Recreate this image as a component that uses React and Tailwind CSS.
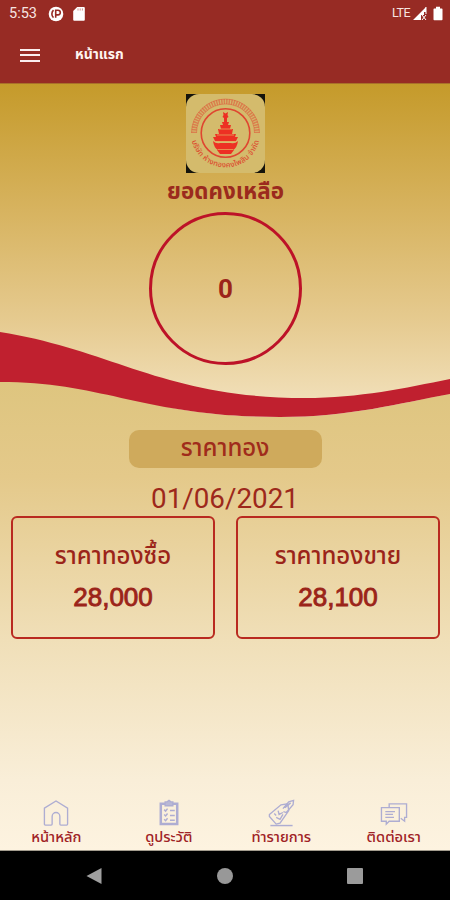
import React from "react";

const THAI = "font-['Noto_Sans_Thai','Liberation_Sans',sans-serif]";

function StatusBar() {
  return (
    <div className="flex h-[27px] items-center justify-between pl-[9px] pr-[7px] text-[#f6e4e0]">
      <div className="flex items-center">
        <span className="w-[39px] pt-[2px] font-[Roboto,sans-serif] text-[14.5px] leading-none">5:53</span>
        <svg className="h-4 w-4" viewBox="0 0 16 16">
          <circle cx="8" cy="8" r="7.3" fill="#fff" />
          <path d="M7.700 11.800V4.300H10a2.300 2.300 0 0 1 0 4.600H7.700M5.500 4.200a5 5 0 0 0 0 7.400" fill="none" stroke="#972b24" strokeWidth="1.6" />
        </svg>
        <svg className="ml-[9px] h-4 w-3" viewBox="0 0 12 16">
          <path d="M4.2 1h6.600q1 0 1 1v11.800q0 1-1 1H1.200q-1 0-1-1V5z" fill="#fff" />
          <path d="M5 2.400v2.200M7.200 2.400v2.200M9.400 2.400v2.200" stroke="#c98b85" strokeWidth=".9" />
        </svg>
      </div>
      <div className="flex items-center">
        <span className="font-[Roboto,sans-serif] text-[12.5px] leading-none tracking-[-0.5px]">LTE</span>
        <svg className="ml-[2px] h-[15px] w-[15px]" viewBox="0 0 15 15">
          <path d="M1 14 14 1v5h-2v3H9v5z" fill="#fff" />
          <path d="m10 9 4 5m0-5-4 5M14 1v7" fill="none" stroke="#fff" strokeWidth="1" />
        </svg>
        <svg className="ml-[6px] h-[15px] w-[10px]" viewBox="0 0 10 15">
          <path d="M3 .8h4v1.700h1.700q.8 0 .8.8v10.200q0 .8-.8.8H1.300q-.8 0-.8-.8V3.300q0-.8.8-.8H3z" fill="#fff" />
        </svg>
      </div>
    </div>
  );
}

function Header() {
  return (
    <header className="h-[83px] shrink-0 bg-[#972b24]">
      <StatusBar />
      <div className="flex h-14 items-center pl-5">
        <div className="flex w-5 flex-col gap-[3.5px]">
          <i className="h-[2px] bg-[#fbeeee]" />
          <i className="h-[2px] bg-[#fbeeee]" />
          <i className="h-[2px] bg-[#fbeeee]" />
        </div>
        <h1 className={`ml-[35px] text-[14px] font-bold leading-none text-[#fff4f0] ${THAI}`}>หน้าแรก</h1>
      </div>
    </header>
  );
}

function Wave() {
  return (
    <svg className="absolute inset-0 h-[768px] w-[450px]" viewBox="0 83 450 768" preserveAspectRatio="none">
      <defs>
        <linearGradient id="upper" gradientUnits="userSpaceOnUse" x1="0" y1="83" x2="0" y2="400">
          <stop offset="0" stopColor="#c59a2a" />
          <stop offset=".4" stopColor="#d7b35f" />
          <stop offset=".76" stopColor="#e6cb91" />
          <stop offset="1" stopColor="#f1dfb8" />
        </linearGradient>
        <linearGradient id="lower" gradientUnits="userSpaceOnUse" x1="0" y1="383" x2="0" y2="850">
          <stop offset="0" stopColor="#dec57f" />
          <stop offset=".2" stopColor="#e4c98a" />
          <stop offset=".55" stopColor="#f0dfb8" />
          <stop offset=".85" stopColor="#f9eed8" />
          <stop offset="1" stopColor="#fdf3e0" />
        </linearGradient>
      </defs>
      <path d="M0 83H450V400H0z" fill="url(#upper)" />
      <path d="M0 381C105 380 145 417 280 417C350 417 400 403 450 394V851H0z" fill="url(#lower)" />
      <path d="M0 83.500H450" stroke="#a9702a" />
      <path d="M0 332C113 350 165 398 305 398C360 398 405 388 450 379V394C400 403 350 417 280 417C145 417 105 382 0 382z" fill="#c0202f" />
      <path d="M0 850.500H450" stroke="#a39c8e" />
    </svg>
  );
}

function Logo() {
  return (
    <svg className="h-[79px] w-[79px]" viewBox="0 0 79 79">
      <path d="M0 0H79V79H0z" fill="#15130b" />
      <rect width="79" height="79" rx="13" fill="#d4bb6c" />
      <g fill="none" stroke="#df4630">
        <path d="M8 39a31.500 31.500 0 0 1 63 0" strokeWidth="5" strokeDasharray="1.5 1" opacity=".5" />
        <path d="M5.500 39a34 34 0 0 1 68 0M10.500 39a29 29 0 0 1 58 0" strokeWidth=".7" opacity=".6" />
        <circle cx="39.5" cy="39" r="24.3" strokeWidth="1.6" />
      </g>
      <g fill="#ed3023">
        <path d="m37 18 2.500 1.500L42 18l-.5 3 1 2-1.500 1v5h-3v-5l-1.500-1 1-2z" />
        <path d="M36 28h7l-1 3h3l-1 4h3l-1 5h4l-1 3h3l-2 4H29l-2-4h3l-1-3h4l-1-5h3l-1-4h3z" />
        <path d="M27 47q3 3 7 2h11q4 1 7-2-1 7-5 9H32q-4-2-5-9zM31 56h17l-3 4H34z" />
      </g>
      <path d="M33 35h13M31 41h17M29 47.500h21M32 55.500h15" stroke="#e7a55b" strokeWidth=".8" />
      <path id="arc" d="M5 39a34.500 34.500 0 0 0 69 0" fill="none" />
      <text className={THAI} fill="#dc4c30" fontSize="7.5" fontWeight="500">
        <textPath href="#arc" startOffset="8" textLength="92">บริษัท ห้างทองคงไพสิน จำกัด</textPath>
      </text>
    </svg>
  );
}

function PriceCard({ label, value }) {
  return (
    <div className="flex h-[123px] w-[204px] flex-col items-center rounded-md border-2 border-[#b92a20] pt-[21px] text-[#9b2419]">
      <div className={`flex h-9 items-center whitespace-nowrap text-[24px] font-medium leading-none ${THAI}`}>{label}</div>
      <div className="mt-[9px] font-['Liberation_Sans',sans-serif] text-[26px] leading-none [-webkit-text-stroke:0.9px]">{value}</div>
    </div>
  );
}

function HomeIcon() {
  return <path d="M2 9.500 14 2l12 7.500V26q0 1-1 1h-6q-1 0-1-1v-8a4 4 0 0 0-8 0v8q0 1-1 1H3q-1 0-1-1z" />;
}
function ClipboardIcon() {
  return (
    <>
      <path d="M5.500 5h17v21h-17z" strokeWidth="2.6" />
      <path d="M10 3h2l2-1.500L16 3h2v4h-8z" fill="#b9b8d5" />
      <path d="m9 11 1.500 1.500L12.500 10m2.500 2h5M9 16l1.500 1.500L12.500 15m2.500 2h5M9 21l1.500 1.500L12.500 20m2.500 2h5" strokeWidth="1.5" />
    </>
  );
}
function TagIcon() {
  return (
    <>
      <path d="m2 16 12-10 7-1 1 7-9 13-4 1-7-8z" />
      <path d="m16 10 6-7 5-1.500-.5 4.500-7 8-3-1M18 9l6-5M7 15l2 2m2-5 1 4 4-2M9 19l4 2 3-5" />
      <path d="M3 27.500h23" strokeWidth="1.5" />
    </>
  );
}
function ChatIcon() {
  return (
    <>
      <path d="M9 9V5h18v14h-2v4l-4-3M1 9h18.500v14H9l-3 3v-3H1z" />
      <path d="M5 13h10M5 16h8M5 19h9" />
    </>
  );
}

function Tab({ label, icon }) {
  return (
    <div className="flex flex-1 flex-col items-center">
      <svg className="h-7 w-7" viewBox="0 0 28 29" fill="none" stroke="#aeadd2" strokeWidth="1.4">{icon}</svg>
      <span className={`mt-px whitespace-nowrap text-[14.7px] font-medium leading-5 text-[#a02226] ${THAI}`}>{label}</span>
    </div>
  );
}

export default function App() {
  return (
    <div className="flex h-[900px] w-[450px] flex-col overflow-hidden">
      <Header />
      <main className="relative h-[768px] shrink-0">
        <Wave />
        <div className="relative flex h-full flex-col items-center pt-[11px]">
          <Logo />
          <h2 className={`flex h-[38px] items-center whitespace-nowrap pl-px text-[22.4px] font-bold leading-none text-[#9b2a1d] ${THAI}`}>ยอดคงเหลือ</h2>
          <div className="mt-px flex h-[153px] w-[153px] items-center justify-center rounded-full border-[3px] border-[#bd1228] pl-px pt-[2px] font-[Roboto,sans-serif] text-[26px] font-bold text-[#9c2419]">0</div>
          <div className={`mt-[65px] flex h-[38px] w-[193px] items-center justify-center rounded-[10px] bg-[#cfaa5c] text-[24px] font-medium leading-none text-[#a02c1b] ${THAI}`}>ราคาทอง</div>
          <div className="mt-4 h-8 font-[Roboto,sans-serif] text-[27.8px] leading-[30px] text-[#9d281b]">01/06/2021</div>
          <div className="flex gap-[21px] pl-px">
            <PriceCard label="ราคาทองซื้อ" value="28,000" />
            <PriceCard label="ราคาทองขาย" value="28,100" />
          </div>
          <nav className="mt-auto flex h-[52px] w-full">
            <Tab label="หน้าหลัก" icon={<HomeIcon />} />
            <Tab label="ดูประวัติ" icon={<ClipboardIcon />} />
            <Tab label="ทำรายการ" icon={<TagIcon />} />
            <Tab label="ติดต่อเรา" icon={<ChatIcon />} />
          </nav>
        </div>
      </main>
      <footer className="flex h-[49px] items-center justify-between bg-black pl-[86px] pr-[87px]">
        <svg className="h-[18px] w-4" viewBox="0 0 16 18"><path d="M15.500 1v16L.5 9z" fill="#a0a0a0" /></svg>
        <span className="h-4 w-4 rounded-full bg-[#989898]" />
        <span className="h-4 w-4 rounded-[1px] bg-[#9b9b9b]" />
      </footer>
    </div>
  );
}
